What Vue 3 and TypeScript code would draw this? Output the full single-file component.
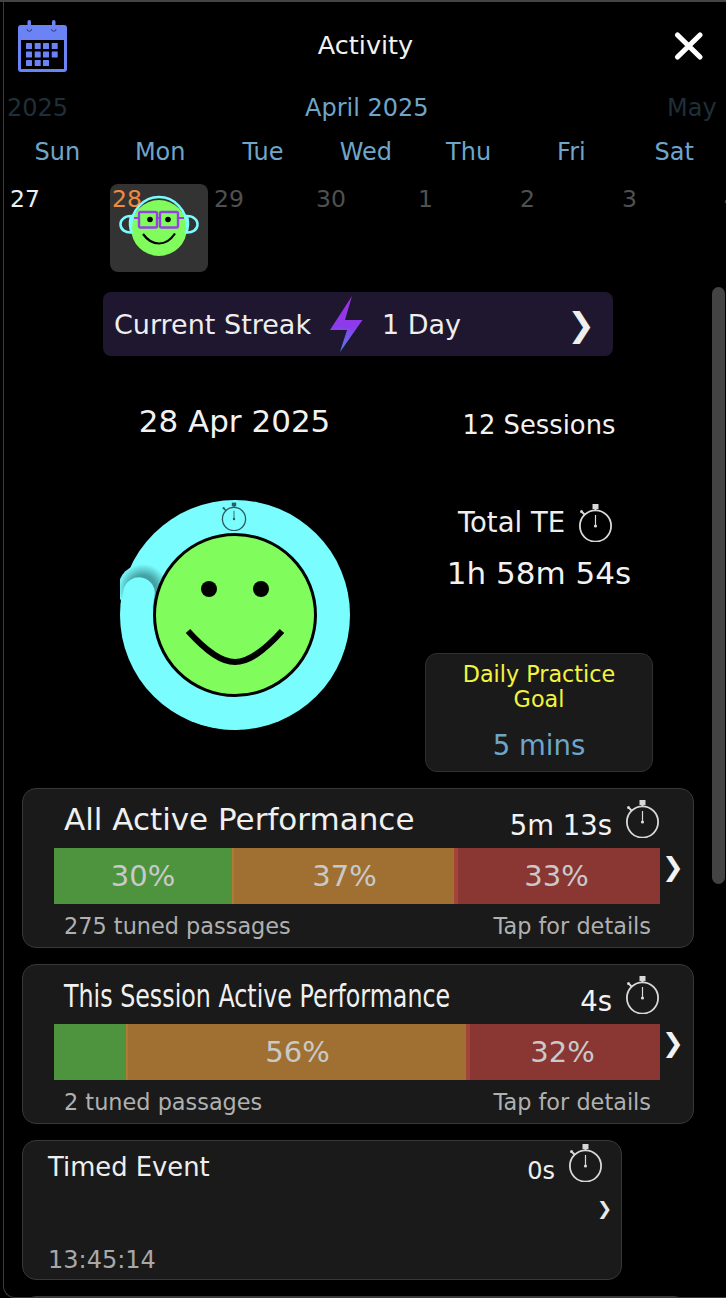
<script setup lang="ts">
interface Segment { width: number; color: string; label: string; sep?: string }
interface PerfCard { title: string; condensed: boolean; time: string; left: string; segments: Segment[] }

const weekdays: string[] = ['Sun', 'Mon', 'Tue', 'Wed', 'Thu', 'Fri', 'Sat']
const days: { label: string; kind: string }[] = [
  { label: '27', kind: 'past' },
  { label: '28', kind: 'today' },
  { label: '29', kind: 'next' },
  { label: '30', kind: 'next' },
  { label: '1', kind: 'next' },
  { label: '2', kind: 'next' },
  { label: '3', kind: 'next' },
  { label: '4', kind: 'next' },
]
const perfCards: PerfCard[] = [
  {
    title: 'All Active Performance', condensed: false, time: '5m 13s', left: '275 tuned passages',
    segments: [
      { width: 180, color: '#4e943f', label: '30%', sep: '#b07a35' },
      { width: 220, color: '#9f7031', label: '37%' },
      { width: 4, color: '#a3443a', label: '' },
      { width: 202, color: '#8a3633', label: '33%' },
    ],
  },
  {
    title: 'This Session Active Performance', condensed: true, time: '4s', left: '2 tuned passages',
    segments: [
      { width: 74, color: '#4e943f', label: '', sep: '#b07a35' },
      { width: 338, color: '#9f7031', label: '56%' },
      { width: 4, color: '#a3443a', label: '' },
      { width: 190, color: '#8a3633', label: '32%' },
    ],
  },
]
const calSquares: { x: number; y: number }[] = []
for (const [r, y] of [43, 51.5, 60].entries()) {
  for (const [c, x] of [26, 34.7, 43, 51.7].entries()) {
    if (!(r === 2 && c === 3)) calSquares.push({ x, y })
  }
}
</script>

<template>
  <div class="screen">
    <svg class="defs" width="0" height="0" aria-hidden="true">
      <symbol id="stopwatch" viewBox="0 0 35 40">
        <circle cx="17.500" cy="24" r="15.600" fill="none" stroke="currentColor" stroke-width="1.800" />
        <rect x="14.500" y="2" width="6" height="5" fill="currentColor" />
        <line x1="17.500" y1="7" x2="17.500" y2="9" stroke="currentColor" stroke-width="2" />
        <line x1="3.500" y1="9.500" x2="7" y2="13" stroke="currentColor" stroke-width="2" />
        <circle cx="3.500" cy="9.500" r="1.500" fill="currentColor" />
        <line x1="17.500" y1="13" x2="17.500" y2="24" stroke="currentColor" stroke-width="1.200" />
        <circle cx="17.500" cy="24" r="1.600" fill="currentColor" />
      </symbol>
      <linearGradient id="bolt" x1="0" y1="0" x2="0" y2="1">
        <stop offset="0" stop-color="#a22ee8" />
        <stop offset="0.55" stop-color="#8b3cec" />
        <stop offset="1" stop-color="#5481f2" />
      </linearGradient>
      <radialGradient id="capShade">
        <stop offset="0" stop-color="#3f9498" />
        <stop offset="0.55" stop-color="#46a2a5" />
        <stop offset="1" stop-color="#7afdff" />
      </radialGradient>
    </svg>

    <header class="top">
      <svg class="cal" width="50" height="54" viewBox="18 19 50 54">
        <rect x="18" y="25" width="49" height="47" rx="3" fill="#6c83f5" />
        <rect x="21" y="40" width="43" height="29" fill="#000" />
        <rect x="27.500" y="20" width="3.500" height="9" rx="1.700" fill="#6c83f5" />
        <rect x="52" y="20" width="3.500" height="9" rx="1.700" fill="#6c83f5" />
        <path d="M27 29a2.300 2.300 0 0 0 4.600 0M51.500 29a2.300 2.300 0 0 0 4.600 0" fill="none" stroke="#2a3670" stroke-width="0.900" />
        <rect v-for="(s, i) in calSquares" :key="i" :x="s.x" :y="s.y" width="6" height="6" rx="0.600" fill="#6c83f5" />
      </svg>
      <h1 class="title">Activity</h1>
      <svg class="close" width="32" height="32" viewBox="0 0 32 32">
        <path d="M4.500 5 27 27M27 5 4.500 27" stroke="#fff" stroke-width="5.200" stroke-linecap="round" />
      </svg>
    </header>

    <div class="months">
      <span class="dim">2025</span>
      <span class="blue">April 2025</span>
      <span class="dim">May 2025</span>
    </div>

    <div class="weekdays">
      <span v-for="d in weekdays" :key="d">{{ d }}</span>
    </div>

    <div class="days">
      <div v-for="d in days" :key="d.label" class="day" :class="d.kind">
        <span>{{ d.label }}</span>
        <svg v-if="d.kind === 'today'" class="avatar" width="84" height="64" viewBox="0 0 84 64">
          <circle cx="42" cy="36" r="28" fill="#80fc5c" />
          <path d="M14 35A28 30 0 0 1 70 35" fill="none" stroke="#7afdff" stroke-width="2.500" />
          <path d="M14 24C7 24 3 28.500 3.500 33 4 37.500 8 41 15 40.500 12.500 36 12.500 30 14 24Z" fill="none" stroke="#7afdff" stroke-width="2.500" />
          <path d="M70 24C77 24 81 28.500 80.500 33 80 37.500 76 41 69 40.500 71.500 36 71.500 30 70 24Z" fill="none" stroke="#7afdff" stroke-width="2.500" />
          <rect x="22" y="20" width="18" height="15.500" rx="1.500" fill="none" stroke="#9a3fe8" stroke-width="2.400" />
          <rect x="43" y="20" width="18" height="15.500" rx="1.500" fill="none" stroke="#9a3fe8" stroke-width="2.400" />
          <path d="M40 26H43M17 26H22M61 26H67" stroke="#9a3fe8" stroke-width="2" />
          <circle cx="33" cy="27.500" r="2.800" fill="#000" />
          <circle cx="51" cy="27.500" r="2.800" fill="#000" />
          <path d="M26 42C31 49 36 51.500 42 51.500S53 49 58 41.500" fill="none" stroke="#000" stroke-width="2.200" />
        </svg>
      </div>
    </div>

    <div class="streak">
      <span>Current Streak</span>
      <svg class="boltIcon" width="34" height="56" viewBox="329 297 34 56">
        <path d="M352 297 330 331H347L340 353 362.500 321H345Z" fill="url(#bolt)" />
      </svg>
      <span>1 Day</span>
      <span class="chev">❯</span>
    </div>

    <section class="hero">
      <div class="heroLeft">
        <div class="date">28 Apr 2025</div>
        <div class="ring">
          <svg width="230" height="230" viewBox="120 500 230 230">
            <circle cx="235" cy="615" r="115" fill="#7afdff" />
            <circle cx="143" cy="589" r="25" fill="url(#capShade)" />
            <path d="M139 593A99 99 0 0 0 235 714" fill="none" stroke="#7afdff" stroke-width="31.500" stroke-linecap="round" />
            <circle cx="235" cy="615" r="80.500" fill="#80fc5c" stroke="#000" stroke-width="3" />
            <circle cx="209" cy="589" r="8" fill="#000" />
            <circle cx="261" cy="589" r="8" fill="#000" />
            <path d="M188 631C208 653 222 662 235 662S262 653 282 631" fill="none" stroke="#000" stroke-width="6" />
          </svg>
          <svg class="ringWatch" width="26" height="30"><use href="#stopwatch" /></svg>
        </div>
      </div>
      <div class="heroRight">
        <div class="sessions">12 Sessions</div>
        <div class="te">
          <span>Total TE</span>
          <svg class="watch" width="35" height="40"><use href="#stopwatch" /></svg>
        </div>
        <div class="teTime">1h 58m 54s</div>
        <div class="goal">
          <div class="goalLabel">Daily Practice<br />Goal</div>
          <div class="goalValue">5 mins</div>
        </div>
      </div>
    </section>

    <section class="cards">
      <article v-for="c in perfCards" :key="c.title" class="card perf">
        <div class="perfHead">
          <h2 :class="{ squeezed: c.condensed }">{{ c.title }}</h2>
          <div class="timeBox">
            <span>{{ c.time }}</span>
            <svg class="watch" width="35" height="40"><use href="#stopwatch" /></svg>
          </div>
        </div>
        <div class="barRow">
          <div class="bar">
            <div
              v-for="(s, i) in c.segments"
              :key="i"
              class="seg"
              :style="{ width: s.width + 'px', background: s.color, borderRightColor: s.sep ?? s.color }"
            >{{ s.label }}</div>
          </div>
          <span class="barChev">❯</span>
        </div>
        <div class="perfFoot">
          <span>{{ c.left }}</span>
          <span>Tap for details</span>
        </div>
      </article>

      <article class="card timed">
        <div class="timedHead">
          <span class="timedTitle">Timed Event</span>
          <div class="timedTime">
            <span>0s</span>
            <svg class="watch" width="35" height="40"><use href="#stopwatch" /></svg>
          </div>
        </div>
        <div class="timedChev">❯</div>
        <div class="timedClock">13:45:14</div>
      </article>

      <article class="card last"></article>
    </section>

    <div class="frameLine"></div>
    <div class="scrollbar"></div>
  </div>
</template>

<style>
html, body { margin: 0; background: #000; }
</style>

<style scoped>
.screen {
  position: relative;
  width: 726px;
  height: 1298px;
  overflow: hidden;
  background: #000;
  color: #eee;
  font-family: "DejaVu Sans", sans-serif;
  box-sizing: border-box;
  border-top: 2px solid #444;
}
.defs { position: absolute; }
.frameLine {
  position: absolute;
  left: 3px;
  top: 0;
  width: 100%;
  height: 100%;
  box-sizing: border-box;
  border-left: 1px solid #3a3a3a;
  border-bottom: 1px solid #3a3a3a;
  border-bottom-left-radius: 12px;
  pointer-events: none;
}
.scrollbar {
  position: absolute;
  left: 712px;
  top: 285px;
  width: 13px;
  height: 597px;
  border-radius: 7px;
  background: #434343;
}
.top {
  display: grid;
  grid-template-columns: 1fr auto 1fr;
  align-items: center;
  height: 89px;
  padding: 0 21px 0 18px;
  box-sizing: border-box;
}
.cal { display: block; margin-top: -1px; }
.title {
  margin: -3px 0 0 8px;
  font-size: 25.500px;
  font-weight: 400;
  color: #f2f2f2;
}
.close { justify-self: end; margin-top: -2px; }
.months {
  display: grid;
  grid-template-columns: 298px 362px auto;
  padding-left: 7px;
  height: 34px;
  line-height: 34px;
  font-size: 24px;
  white-space: nowrap;
}
.dim { color: #1f2f39; }
.blue { color: #6fa5c8; }
.weekdays {
  display: grid;
  grid-template-columns: repeat(7, 102.800px);
  padding-left: 6px;
  margin-top: 10px;
  height: 34px;
  line-height: 34px;
  font-size: 24px;
  color: #6fa5c8;
  text-align: center;
}
.days {
  display: grid;
  grid-template-columns: repeat(8, 102px);
  padding-left: 8px;
  margin-top: 15px;
  height: 88px;
  font-size: 23.500px;
  line-height: 30px;
  white-space: nowrap;
}
.day {
  position: relative;
  width: 98px;
  height: 88px;
  padding-left: 2px;
  box-sizing: border-box;
  border-radius: 8px;
}
.past { color: #eee; }
.next { color: #505050; }
.today { background: #333; color: #f08a3c; }
.avatar { position: absolute; left: 7px; top: 8px; }
.streak {
  display: flex;
  align-items: center;
  width: 510px;
  height: 64px;
  margin: 20px 0 0 103px;
  padding: 0 18px 0 11px;
  box-sizing: border-box;
  border-radius: 8px;
  background: #1e172f;
  font-size: 27px;
  color: #eee;
}
.boltIcon { margin: 0 19px 0 18px; flex: none; }
.chev { margin-left: auto; font-size: 33px; }
.hero {
  display: grid;
  grid-template-columns: 269px 228px;
  column-gap: 56px;
  padding-left: 100px;
  height: 416px;
}
.heroLeft, .heroRight { display: flex; flex-direction: column; align-items: center; }
.date {
  margin-top: 45px;
  font-size: 31px;
  line-height: 40px;
  color: #f2f2f2;
}
.ring { position: relative; width: 230px; height: 230px; margin-top: 59px; }
.ring > svg:first-child { display: block; }
.ringWatch { position: absolute; left: 101px; top: 1px; color: #2e5d60; }
.sessions { margin-top: 49px; font-size: 25.800px; line-height: 40px; color: #f2f2f2; }
.te {
  display: flex;
  align-items: center;
  gap: 13px;
  margin: 57px 7px 0 0;
  height: 40px;
  font-size: 27.500px;
  color: #eee;
}
.watch { color: #d8d8d8; flex: none; display: block; }
.teTime { margin-top: 11px; font-size: 31px; line-height: 40px; color: #f2f2f2; }
.goal {
  width: 228px;
  height: 119px;
  margin-top: 60px;
  padding-top: 8px;
  box-sizing: border-box;
  border: 1px solid #303030;
  border-radius: 12px;
  background: #1a1a1a;
  text-align: center;
}
.goalLabel { font-size: 22.300px; line-height: 25px; color: #f2f53c; }
.goalValue { margin-top: 15px; font-size: 27.500px; line-height: 36px; color: #6fa5c8; }
.cards {
  display: flex;
  flex-direction: column;
  gap: 16px;
  margin: 16px 0 0 22px;
}
.card {
  box-sizing: border-box;
  border: 1px solid #383838;
  border-radius: 14px;
  background: #1a1a1a;
  flex: none;
}
.perf { width: 672px; height: 160px; }
.perfHead {
  display: flex;
  justify-content: space-between;
  height: 59px;
  padding: 0 33px 0 41px;
  white-space: nowrap;
}
h2 {
  margin: 11px 0 0;
  font-size: 31px;
  line-height: 38px;
  font-weight: 400;
  color: #f0f0f0;
}
.squeezed {
  margin-top: 12px;
  font-size: 32px;
  transform: scaleX(0.743);
  transform-origin: left center;
  width: 385px;
}
.timeBox {
  display: flex;
  align-items: center;
  gap: 13px;
  font-size: 27.500px;
  line-height: 40px;
  color: #f2f2f2;
  margin-top: 9px;
  height: 40px;
}
.timeBox span { margin-top: 13px; }
.barRow { display: flex; align-items: center; padding-left: 31px; height: 56px; }
.bar { display: flex; width: 606px; height: 56px; }
.seg {
  box-sizing: border-box;
  flex: none;
  border-right: 2px solid transparent;
  text-align: center;
  font-size: 29px;
  line-height: 56px;
  color: #c9c9c9;
}
.seg:nth-child(2) { padding-left: 3px; }
.seg:last-child { padding-right: 3px; }
.barChev { margin: -18px 0 0 2px; font-size: 26px; color: #f2f2f2; }
.perfFoot {
  display: flex;
  justify-content: space-between;
  padding: 0 42px 0 41px;
  font-size: 22.400px;
  line-height: 44px;
  color: #b0b0b0;
}
.timed { position: relative; width: 600px; height: 140px; }
.timedHead {
  display: flex;
  justify-content: space-between;
  padding: 1px 18px 0 25px;
  height: 53px;
}
.timedTitle { margin-top: 9px; font-size: 25.800px; line-height: 32px; color: #eee; }
.timedTime { display: flex; align-items: center; gap: 13px; height: 40px; font-size: 24px; color: #eee; }
.timedTime span { margin-top: 17px; }
.timedChev {
  position: absolute;
  right: 9px;
  top: 56px;
  font-size: 18px;
  line-height: 24px;
  color: #e8e8e8;
}
.timedClock {
  margin: 50px 0 0 25px;
  font-size: 24px;
  line-height: 30px;
  color: #a8a8a8;
}
.last { width: 666px; height: 120px; }
</style>
